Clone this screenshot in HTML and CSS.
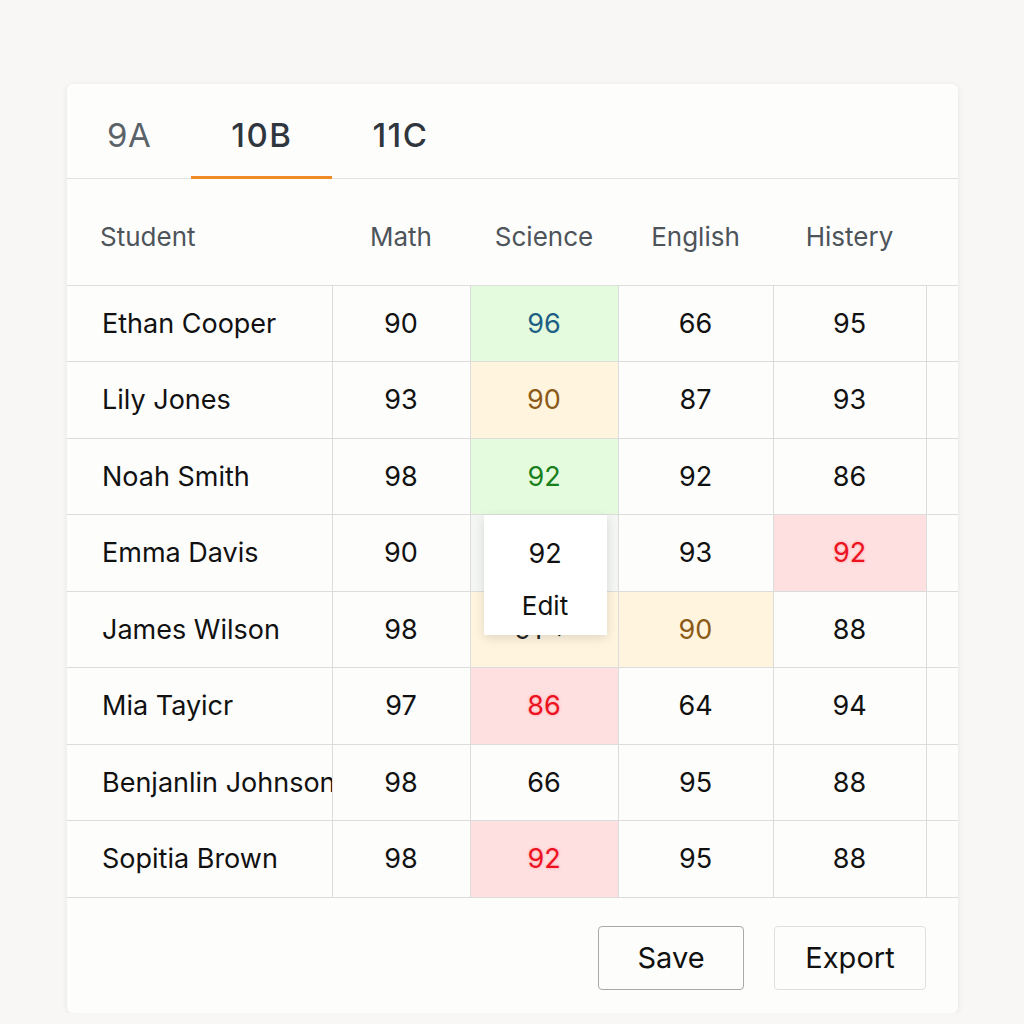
FILE: index.html
```html
<!DOCTYPE html>
<html lang="en">
<head>
  <meta charset="UTF-8">
  <meta name="viewport" content="width=device-width, initial-scale=1.0">
  <title>Class Grades</title>
  <link rel="stylesheet" href="styles.css">
</head>
<body>

  <div class="card">
    <nav class="tabs">
      <a class="tab">9A</a>
      <a class="tab active">10B</a>
      <a class="tab dark">11C</a>
    </nav>

    <table class="grades">
      <colgroup>
        <col class="col-name">
        <col class="col-math">
        <col class="col-sci">
        <col class="col-eng">
        <col class="col-hist">
        <col class="col-extra">
      </colgroup>
      <thead>
        <tr>
          <th class="name">Student</th>
          <th>Math</th>
          <th>Science</th>
          <th>English</th>
          <th>Histery</th>
          <th></th>
        </tr>
      </thead>
      <tbody>
        <tr>
          <td class="name">Ethan Cooper</td>
          <td>90</td>
          <td class="good blue">96</td>
          <td>66</td>
          <td>95</td>
          <td></td>
        </tr>
        <tr>
          <td class="name">Lily Jones</td>
          <td>93</td>
          <td class="warn">90</td>
          <td>87</td>
          <td>93</td>
          <td></td>
        </tr>
        <tr>
          <td class="name">Noah Smith</td>
          <td>98</td>
          <td class="good">92</td>
          <td>92</td>
          <td>86</td>
          <td></td>
        </tr>
        <tr>
          <td class="name">Emma Davis</td>
          <td>90</td>
          <td class="editing">
            92
            <div class="popup">
              <div class="popup-value">92</div>
              <div class="popup-action">Edit</div>
            </div>
          </td>
          <td>93</td>
          <td class="bad">92</td>
          <td></td>
        </tr>
        <tr>
          <td class="name">James Wilson</td>
          <td>98</td>
          <td class="warn plain">91 ✓</td>
          <td class="warn">90</td>
          <td>88</td>
          <td></td>
        </tr>
        <tr>
          <td class="name">Mia Tayicr</td>
          <td>97</td>
          <td class="bad">86</td>
          <td>64</td>
          <td>94</td>
          <td></td>
        </tr>
        <tr>
          <td class="name">Benjanlin Johnson</td>
          <td>98</td>
          <td>66</td>
          <td>95</td>
          <td>88</td>
          <td></td>
        </tr>
        <tr>
          <td class="name">Sopitia Brown</td>
          <td>98</td>
          <td class="bad">92</td>
          <td>95</td>
          <td>88</td>
          <td></td>
        </tr>
      </tbody>
    </table>

    <div class="actions">
      <button class="btn save">Save</button>
      <button class="btn">Export</button>
    </div>
  </div>

</body>
</html>
```

FILE: styles.css
```css
body {
  font-family: Inter, "Noto Sans", sans-serif;
  background: #f8f7f6;
  margin: 0;
  padding: 0;
}
.card {
  width: 891px;
  margin: 84px 0 0 67px;
  background: #fdfdfc;
  border-radius: 6px;
  box-shadow: 0px 1px 6px rgba(0,0,0,0.08);
}

/* class tabs */
.tabs {
  display: flex;
  height: 95px;
  border-bottom: 1px solid #e2e2e2;
  box-sizing: border-box;
}
.tab {
  display: flex;
  align-items: center;
  padding: 10px 40px 0;
  font-size: 33px;
  letter-spacing: 0.5px;
  color: #5b6268;
  border-bottom: 3px solid transparent;
  margin-bottom: -1px;
}
.tab.active {
  color: #2f363d;
  font-weight: 500;
  letter-spacing: 1.5px;
  border-bottom-color: #f08a24;
}
.tab.dark {
  color: #2f363d;
  font-weight: 500;
  letter-spacing: 1.5px;
}

/* grades table */
.grades {
  width: 100%;
  border-collapse: collapse;
  table-layout: fixed;
}
.col-name { width: 265px; }
.col-math { width: 138px; }
.col-sci { width: 148px; }
.col-eng { width: 155px; }
.col-hist { width: 153px; }
.col-extra { width: 32px; }

.grades th {
  height: 106px;
  padding: 10px 0 0;
  font-size: 26px;
  font-weight: 400;
  color: #4d545a;
  text-align: center;
  border-bottom: 1px solid #dedede;
  box-sizing: border-box;
}
.grades th.name {
  text-align: left;
  padding-left: 33px;
}
.grades td {
  height: 76.5px;
  padding: 0;
  font-size: 27px;
  color: #111;
  text-align: center;
  border: 1px solid #dcdcdc;
  box-sizing: border-box;
}
.grades td.name {
  text-align: left;
  padding-left: 35px;
  white-space: nowrap;
  overflow: hidden;
  border-left: none;
}
.grades td:last-child {
  border-right: none;
}
.grades tbody tr:first-child td {
  border-top: none;
}

.good {
  background: #e5fbdd;
  color: #17801c !important;
}
.good.blue {
  color: #1e5f86 !important;
}
.warn {
  background: #fff4de;
  color: #8b5a18 !important;
}
.warn.plain {
  color: #222 !important;
}
.bad {
  background: #ffe0e1;
  color: #ec1222 !important;
  text-shadow: 0 0 3px rgba(255,40,40,0.35);
}

/* inline edit popup */
.editing {
  position: relative;
  background: #f4f6f3;
}
.popup {
  position: absolute;
  top: 0;
  left: 13px;
  width: 123px;
  height: 120px;
  background: #fff;
  box-shadow: 0px 3px 10px rgba(0,0,0,0.12);
  z-index: 2;
}
.popup-value {
  height: 76px;
  line-height: 78px;
  font-size: 27px;
  color: #111;
}
.popup-action {
  font-size: 26px;
  color: #111;
  line-height: 30px;
}

/* footer buttons */
.actions {
  display: flex;
  justify-content: flex-end;
  gap: 30px;
  padding: 28px 32px 23px;
}
.btn {
  height: 64px;
  width: 152px;
  font-family: Inter, "Noto Sans", sans-serif;
  font-size: 29px;
  color: #111;
  background: #fdfdfc;
  border: 1px solid #e0e0e0;
  border-radius: 4px;
}
.btn.save {
  width: 146px;
  border-color: #a9a9a9;
}
```
